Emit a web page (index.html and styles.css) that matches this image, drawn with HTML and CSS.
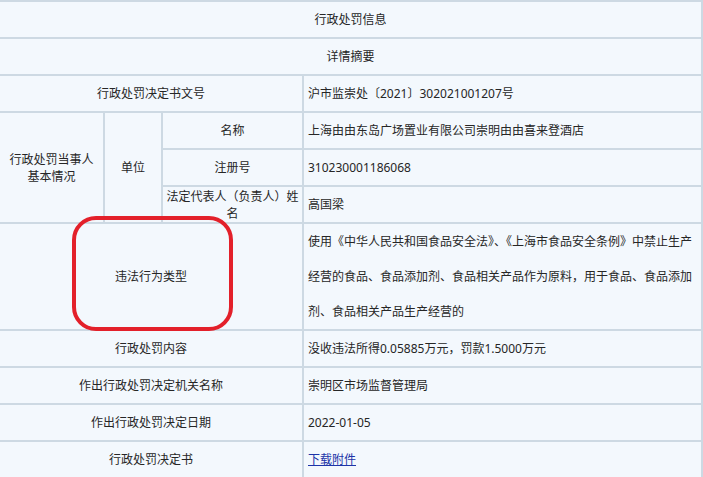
FILE: index.html
```html
<!DOCTYPE html>
<html lang="zh-CN">
<head>
    <meta charset="UTF-8">
    <meta name="viewport" content="width=device-width, initial-scale=1.0">
    <title>行政处罚信息</title>
    <link rel="stylesheet" href="styles.css">
</head>
<body>
    <div class="wrap">
        <table class="info">
            <colgroup>
                <col class="col-party">
                <col class="col-unit">
                <col class="col-field">
                <col class="col-value">
            </colgroup>
            <tr>
                <td colspan="4" class="title">行政处罚信息</td>
            </tr>
            <tr>
                <td colspan="4" class="title">详情摘要</td>
            </tr>
            <tr>
                <td colspan="3" class="label">行政处罚决定书文号</td>
                <td class="value">沪市监崇处〔2021〕302021001207号</td>
            </tr>
            <tr>
                <td rowspan="3" class="label">行政处罚当事人<br>基本情况</td>
                <td rowspan="3" class="label">单位</td>
                <td class="label">名称</td>
                <td class="value">上海由由东岛广场置业有限公司崇明由由喜来登酒店</td>
            </tr>
            <tr>
                <td class="label">注册号</td>
                <td class="value">310230001186068</td>
            </tr>
            <tr>
                <td class="label">法定代表人（负责人）姓名</td>
                <td class="value">高国梁</td>
            </tr>
            <tr>
                <td colspan="3" class="label">违法行为类型</td>
                <td class="value long">使用《中华人民共和国食品安全法》、《上海市食品安全条例》中禁止生产经营的食品、食品添加剂、食品相关产品作为原料，用于食品、食品添加剂、食品相关产品生产经营的</td>
            </tr>
            <tr>
                <td colspan="3" class="label">行政处罚内容</td>
                <td class="value">没收违法所得0.05885万元，罚款1.5000万元</td>
            </tr>
            <tr>
                <td colspan="3" class="label">作出行政处罚决定机关名称</td>
                <td class="value">崇明区市场监督管理局</td>
            </tr>
            <tr>
                <td colspan="3" class="label">作出行政处罚决定日期</td>
                <td class="value">2022-01-05</td>
            </tr>
            <tr>
                <td colspan="3" class="label">行政处罚决定书</td>
                <td class="value"><a href="#">下载附件</a></td>
            </tr>
        </table>

        <!-- 标注框 -->
        <div class="mark"></div>
    </div>
</body>
</html>
```

FILE: styles.css
```css
body {
    margin: 0;
    padding: 0;
    background-color: #f3f8fd;
    font-family: "Noto Sans", "Noto Sans CJK SC", sans-serif;
    font-size: 12px;
    color: #262626;
    overflow: hidden;
}

.wrap {
    position: relative;
    width: 703px;
    margin-left: -2px;
}

.info {
    width: 703px;
    border-collapse: collapse;
    table-layout: fixed;
}

.col-party {
    width: 105px;
}

.col-unit {
    width: 58px;
}

.col-field {
    width: 141px;
}

.col-value {
    width: 399px;
}

.info td {
    border: 2px solid #cdd9e3;
    height: 35px;
    padding: 0 2px;
    line-height: 17px;
    text-align: center;
    vertical-align: middle;
}

.info td.value {
    text-align: left;
    padding-left: 4px;
}

.info td.long {
    line-height: 35px;
    padding-top: 0;
    padding-bottom: 0;
}

.value a {
    color: #1d34a8;
    text-decoration: underline;
}

.mark {
    position: absolute;
    left: 74px;
    top: 216px;
    width: 153px;
    height: 107px;
    border: 4px solid #e3202a;
    border-radius: 24px;
}
```
